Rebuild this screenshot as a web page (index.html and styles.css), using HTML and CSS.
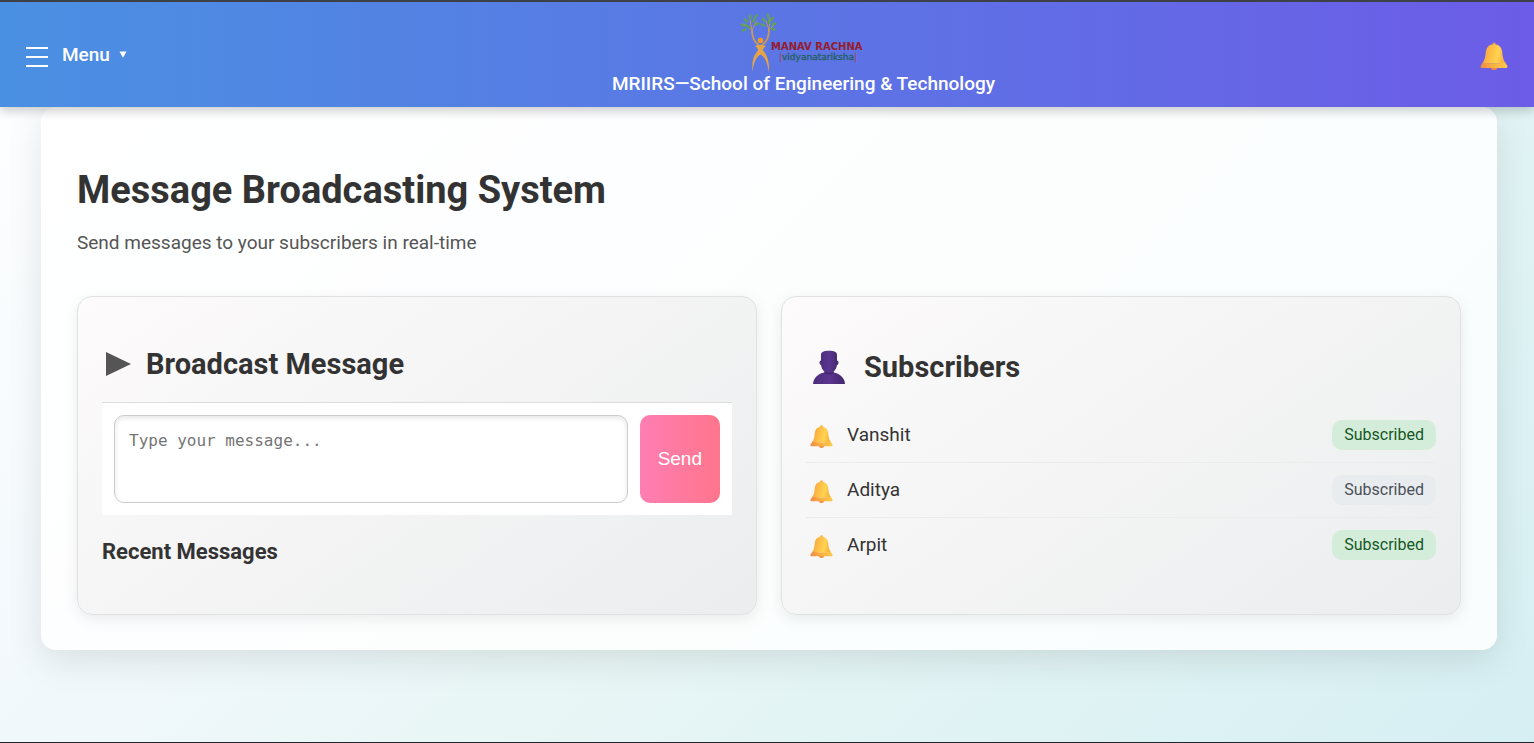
FILE: index.html
```html
<!DOCTYPE html>
<html lang="en">
<head>
<meta charset="utf-8">
<meta name="viewport" content="width=device-width, initial-scale=1">
<title>Message Broadcasting System</title>
<link rel="stylesheet" href="styles.css">
</head>
<body>
<svg class="defs" aria-hidden="true">
  <defs>
    <linearGradient id="bell-fill" x1="0" y1="0" x2="1" y2="0.2">
      <stop offset="0" stop-color="#f39a3c"/>
      <stop offset="0.4" stop-color="#fdbb45"/>
      <stop offset="0.75" stop-color="#ffd350"/>
      <stop offset="1" stop-color="#f9b441"/>
    </linearGradient>
    <linearGradient id="bell-rim" x1="0" y1="0" x2="1" y2="0">
      <stop offset="0" stop-color="#ee8a44"/>
      <stop offset="0.5" stop-color="#fbb243"/>
      <stop offset="1" stop-color="#ffc94a"/>
    </linearGradient>
    <linearGradient id="person-fill" x1="0" y1="0" x2="1" y2="0">
      <stop offset="0" stop-color="#4b2d78"/>
      <stop offset="0.5" stop-color="#5b3590"/>
      <stop offset="1" stop-color="#44276c"/>
    </linearGradient>
    <symbol id="bell" viewBox="0 0 28 28">
      <ellipse cx="14" cy="26.200" rx="3" ry="1.800" fill="#f3873f"/>
      <circle cx="14" cy="1.900" r="1.500" fill="#f7a83f"/>
      <path d="M14 2.200C9 2.200 6.400 5 5.800 10C5.400 15 4.700 18 2.200 21.400H25.800C23.300 18 22.600 15 22.200 10C21.600 5 19 2.200 14 2.200Z" fill="url(#bell-fill)"/>
      <path d="M3 20.400Q14 22.400 25 20.400L27.200 23.400Q28.200 26 26 26H2Q-0.200 26 0.800 23.400Z" fill="url(#bell-rim)"/>
    </symbol>
  </defs>
</svg>

<header class="topbar">
  <button class="menu" type="button" aria-haspopup="true">
    <svg class="menu-icon" viewBox="0 0 22 22" aria-hidden="true"><path d="M0 2H22M0 11H22M0 20H22" stroke="#fff" stroke-width="2.200"/></svg>
    <span>Menu</span>
    <svg class="menu-caret" viewBox="0 0 8 7" aria-hidden="true"><path d="M0.500 0.500H7.500L4 6.800Z" fill="#fff"/></svg>
  </button>
  <div class="brand">
    <svg class="brand-logo" viewBox="0 0 128 60" role="img" aria-label="Manav Rachna Vidyanatariksha">
      <g fill="none" stroke="#c9995a" stroke-linecap="round">
        <path d="M13 18C13 25 15 29.500 19 32.500M30 18C30 25 28 29.500 24 32.500" stroke-width="1.800"/>
        <path d="M13 18L11 8M13 18L5 12M13 18L17 10M30 18L27 9M30 18L36 12M30 18L31 6" stroke-width="0.900"/>
      </g>
      <path d="M16 34Q21.500 31.500 27 34Q23.500 36.500 24 38.500C28.500 43 30.500 50 30 60C28.500 52 26.500 45 21.500 42.500C16.500 45 14.500 52 13.500 60C12.500 50 14.500 43 19 38.500Q19.500 36.500 16 34Z" fill="#e3a347"/>
      <circle cx="21.500" cy="28.500" r="2.800" fill="#f09a2a"/>
      <g fill="#5fa548">
        <ellipse cx="4" cy="13" rx="2.800" ry="1.200" transform="rotate(20 4 13)"/>
        <ellipse cx="7" cy="8.500" rx="2.800" ry="1.200" transform="rotate(50 7 8.500)"/>
        <ellipse cx="11" cy="5" rx="2.800" ry="1.200" transform="rotate(80 11 5)"/>
        <ellipse cx="5" cy="18" rx="2.800" ry="1.200" transform="rotate(-25 5 18)"/>
        <ellipse cx="9" cy="14.500" rx="2.800" ry="1.200" transform="rotate(35 9 14.500)"/>
        <ellipse cx="15" cy="8" rx="2.800" ry="1.200" transform="rotate(-65 15 8)"/>
        <ellipse cx="18" cy="12" rx="2.800" ry="1.200" transform="rotate(-35 18 12)"/>
        <ellipse cx="17" cy="4" rx="2.400" ry="1.100" transform="rotate(-50 17 4)"/>
        <ellipse cx="24" cy="13" rx="2.800" ry="1.200" transform="rotate(30 24 13)"/>
        <ellipse cx="25" cy="8" rx="2.800" ry="1.200" transform="rotate(60 25 8)"/>
        <ellipse cx="29" cy="4" rx="2.800" ry="1.200" transform="rotate(80 29 4)"/>
        <ellipse cx="33" cy="7" rx="2.800" ry="1.200" transform="rotate(-50 33 7)"/>
        <ellipse cx="35" cy="12" rx="2.800" ry="1.200" transform="rotate(-20 35 12)"/>
        <ellipse cx="30" cy="10" rx="2.400" ry="1.100" transform="rotate(70 30 10)"/>
        <ellipse cx="34" cy="17" rx="2.800" ry="1.200" transform="rotate(20 34 17)"/>
      </g>
      <text class="logo-name" x="32" y="38">MANAV RACHNA</text>
      <text class="logo-sub" x="40" y="48"><tspan class="logo-bar">|</tspan>vidyanatariksha<tspan class="logo-bar">|</tspan></text>
    </svg>
    <div class="brand-name">MRIIRS—School of Engineering &amp; Technology</div>
  </div>
  <button class="notify" type="button" aria-label="Notifications">
    <svg class="notify-icon" aria-hidden="true"><use href="#bell"/></svg>
  </button>
</header>

<main class="page">
  <div class="panel">
    <h1 class="title">Message Broadcasting System</h1>
    <p class="subtitle">Send messages to your subscribers in real-time</p>
    <div class="cards">
      <section class="card">
        <h2 class="card-title">
          <svg class="card-icon" viewBox="0 0 32 32" aria-hidden="true"><path d="M4 4L29 16L4 28Z" fill="#555"/></svg>
          <span>Broadcast Message</span>
        </h2>
        <form class="composer">
          <textarea class="message" placeholder="Type your message..." aria-label="Message"></textarea>
          <button class="send" type="button">Send</button>
        </form>
        <h3 class="recent">Recent Messages</h3>
      </section>
      <section class="card">
        <h2 class="card-title card-title-tall">
          <svg class="person-icon" viewBox="0 0 46 36" aria-hidden="true">
            <path d="M7 35C7.500 27.500 14 23 23 23C32 23 38.500 27.500 39 35Z" fill="url(#person-fill)"/>
            <path d="M15 6C15 2.800 18 1.800 23 1.800C28 1.800 31 2.800 31 6V11.500C33 11.500 33 15.500 31 16C30.500 19.500 29 21.500 27 23V24.500H19V23C17 21.500 15.500 19.500 15 16C13 15.500 13 11.500 15 11.500Z" fill="url(#person-fill)"/>
            <path d="M18 22.300Q23 25 28 22.300L27.500 24.500Q23 26.500 18.500 24.500Z" fill="#452770"/>
          </svg>
          <span>Subscribers</span>
        </h2>
        <ul class="subscribers">
          <li class="subscriber">
            <svg class="row-bell" aria-hidden="true"><use href="#bell"/></svg>
            <span class="name">Vanshit</span>
            <span class="badge badge-on">Subscribed</span>
          </li>
          <li class="subscriber">
            <svg class="row-bell" aria-hidden="true"><use href="#bell"/></svg>
            <span class="name">Aditya</span>
            <span class="badge">Subscribed</span>
          </li>
          <li class="subscriber">
            <svg class="row-bell" aria-hidden="true"><use href="#bell"/></svg>
            <span class="name">Arpit</span>
            <span class="badge badge-on">Subscribed</span>
          </li>
        </ul>
      </section>
    </div>
  </div>
</main>
</body>
</html>
```

FILE: styles.css
```css
* {
  box-sizing: border-box;
}

body {
  margin: 0;
  min-height: 100vh;
  border-top: 2px solid #3d4047;
  border-bottom: 1px solid #22262c;
  background: linear-gradient(135deg, #ffffff 0%, #f1f8fc 33%, #e8f6f5 55%, #d6eff3 100%);
  color: #333;
  font-family: Roboto, "Liberation Sans", sans-serif;
  font-size: 19px;
}

h1, h2, h3, p, ul {
  margin: 0;
  padding: 0;
}

button {
  border: 0;
  cursor: pointer;
}

.defs {
  display: block;
  width: 0;
  height: 0;
}

.topbar {
  position: relative;
  display: flex;
  align-items: center;
  justify-content: space-between;
  padding: 10px 26px;
  background: linear-gradient(90deg, #4a90e2, #6c5ce7);
  box-shadow: 0 4px 10px rgba(0, 0, 0, 0.2);
  color: #fff;
}

.menu {
  display: flex;
  align-items: center;
  padding: 0;
  background: none;
  color: inherit;
  font: 500 19px/24px Roboto, sans-serif;
}

.menu-icon {
  width: 22px;
  height: 22px;
  margin: 4px 14px 0 0;
}

.menu-caret {
  width: 8px;
  height: 7px;
  margin-left: 9px;
}

.brand {
  display: flex;
  flex-direction: column;
  align-items: center;
}

.brand-logo {
  width: 128px;
  height: 60px;
}

.brand-name {
  padding-bottom: 1px;
  font-weight: 500;
  line-height: 24px;
}

.logo-name {
  fill: #971c2c;
  font: bold 10px "DejaVu Sans", sans-serif;
}

.logo-sub {
  fill: #245f62;
  stroke: #245f62;
  stroke-width: 0.3px;
  font: 9px "DejaVu Sans", sans-serif;
}

.logo-bar {
  fill: #9c4a78;
  stroke: #9c4a78;
}

.notify {
  padding: 2px 0 0;
  background: none;
}

.notify-icon {
  display: block;
  width: 28px;
  height: 28px;
}

.page {
  padding: 0 37px 0 41px;
}

.panel {
  padding: 60px 36px 35px;
  border-radius: 15px;
  background: rgba(255, 255, 255, 0.85);
  box-shadow: 0 10px 36px rgba(0, 0, 0, 0.1);
}

.title {
  font-size: 38px;
  font-weight: 700;
  line-height: 46px;
}

.subtitle {
  margin-top: 18px;
  color: #555;
  line-height: 24px;
}

.cards {
  display: grid;
  grid-template-columns: 1fr 1fr;
  gap: 24px;
  margin-top: 41px;
}

.card {
  padding: 47px 24px 42px;
  border: 1px solid #dfe1e2;
  border-radius: 15px;
  background: linear-gradient(145deg, #fdfbfb, #ebedee);
  box-shadow: 0 4px 15px rgba(0, 0, 0, 0.08);
}

.card-title {
  display: flex;
  align-items: center;
  gap: 12px;
  height: 40px;
  font-size: 29px;
  font-weight: 700;
}

.card-title-tall {
  height: 46px;
}

.card-icon {
  width: 32px;
  height: 32px;
}

.person-icon {
  width: 46px;
  height: 36px;
}

.composer {
  display: flex;
  gap: 12px;
  margin-top: 18px;
  padding: 12px;
  border-top: 1px solid #ddd;
  background: #fff;
}

.message {
  flex: 1;
  height: 88px;
  padding: 14px;
  border: 1px solid #ccc;
  border-radius: 10px;
  background: #fff;
  box-shadow: inset 0 2px 5px rgba(0, 0, 0, 0.1);
  font: 16px/22px "DejaVu Sans Mono", monospace;
  resize: none;
}

.message::placeholder {
  color: #757575;
}

.send {
  padding: 0 18px;
  border-radius: 10px;
  background: linear-gradient(90deg, #ff7eb3, #ff758c);
  color: #fff;
  font: 19px "Liberation Sans", Arial, sans-serif;
}

.recent {
  margin-top: 24px;
  font-size: 22px;
  line-height: 26px;
}

.subscribers {
  margin-top: 18px;
  list-style: none;
}

.subscriber {
  display: flex;
  align-items: center;
  padding: 12px 0;
  border-bottom: 1px solid #ebecec;
}

.subscriber:last-child {
  border-bottom: 0;
}

.row-bell {
  width: 23px;
  height: 23px;
  margin: 3px 14px 0 4px;
}

.name {
  flex: 1;
  padding-bottom: 2px;
}

.badge {
  padding: 5px 12px;
  border-radius: 10px;
  background: #e9ecef;
  color: #495057;
  font-size: 16px;
  line-height: 20px;
}

.badge-on {
  background: #d4edda;
  color: #155724;
}
```
